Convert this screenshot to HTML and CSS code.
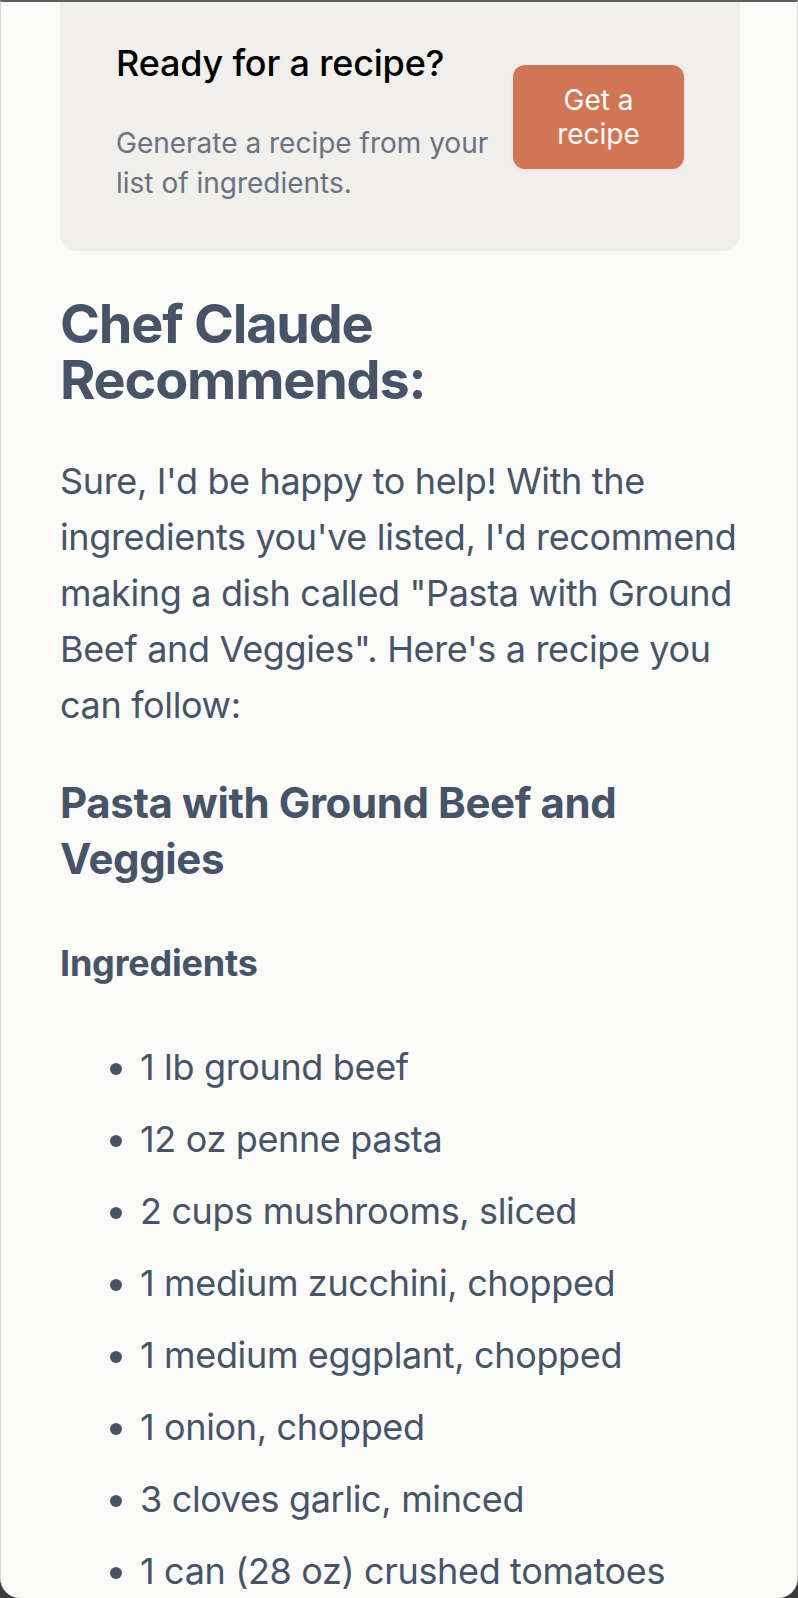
FILE: index.html
```html
<!DOCTYPE html>
<html lang="en">
<head>
<meta charset="utf-8">
<title>Chef Claude</title>
<link rel="stylesheet" href="styles.css">
</head>
<body>
<div class="window">
  <main class="main">
    <section class="get-recipe">
      <div class="get-recipe-text">
        <h3 class="get-recipe-title">Ready for a recipe?</h3>
        <p class="get-recipe-desc">Generate a recipe from your list of ingredients.</p>
      </div>
      <button class="get-recipe-btn">Get a recipe</button>
    </section>
    <section class="suggested">
      <h2 class="suggested-title">Chef Claude Recommends:</h2>
      <p class="suggested-p">Sure, I'd be happy to help! With the ingredients you've listed, I'd recommend making a dish called "Pasta with Ground Beef and Veggies". Here's a recipe you can follow:</p>
      <h3 class="suggested-h3">Pasta with Ground Beef and Veggies</h3>
      <h4 class="suggested-h4">Ingredients</h4>
      <ul class="suggested-list">
        <li>1 lb ground beef</li>
        <li>12 oz penne pasta</li>
        <li>2 cups mushrooms, sliced</li>
        <li>1 medium zucchini, chopped</li>
        <li>1 medium eggplant, chopped</li>
        <li>1 onion, chopped</li>
        <li>3 cloves garlic, minced</li>
        <li>1 can (28 oz) crushed tomatoes</li>
      </ul>
    </section>
  </main>
</div>
</body>
</html>
```

FILE: styles.css
```css
* { box-sizing: border-box; }

html {
  background: #3c3c3c;
}

body {
  margin: 0;
  font-family: Inter, "Noto Sans", sans-serif;
}

.window {
  height: 1598px;
  overflow: hidden;
  background: #FAFAF8;
  border-top: 2px solid #606060;
  border-left: 1px solid #d6d6d4;
  border-right: 1px solid #d6d6d4;
  border-radius: 0 0 20px 20px;
}

.main {
  padding: 0 57px 0 59px;
}

.get-recipe {
  margin-top: -19px;
  display: flex;
  justify-content: space-between;
  align-items: center;
  border-radius: 16px;
  background: #F0EFEB;
  padding: 20px 56px;
}

.get-recipe-title {
  margin: 36px 0;
  font-size: 36px;
  font-weight: 500;
  line-height: 48px;
  letter-spacing: -0.2px;
  color: #000;
}

.get-recipe-desc {
  margin: 28px 0;
  color: #6B7280;
  font-size: 28px;
  line-height: 40px;
}

.get-recipe-btn {
  border: none;
  border-radius: 12px;
  background: #D17557;
  box-shadow: 0 2px 4px 0 rgba(0, 0, 0, 0.05);
  color: #FAFAF8;
  padding: 18px 34px;
  font-family: Inter, "Noto Sans", sans-serif;
  font-size: 28px;
  flex-shrink: 0;
  width: 171px;
}

.suggested {
  color: #475467;
  font-size: 36px;
  line-height: 56px;
  font-weight: 400;
  letter-spacing: -0.35px;
}

.suggested-title {
  font-size: 54px;
  font-weight: 700;
  letter-spacing: -1.2px;
  margin: 45px 0;
}

.suggested-p {
  margin: 36px 0;
}

.suggested-h3 {
  font-size: 42px;
  font-weight: 700;
  letter-spacing: -0.4px;
  margin: 42px 0;
}

.suggested-h4 {
  font-size: 36px;
  font-weight: 700;
  letter-spacing: -0.2px;
  margin: 48px 0;
}

.suggested-list {
  margin: 36px 0;
  padding-left: 80px;
}

.suggested-list li {
  margin-bottom: 16px;
}
```
